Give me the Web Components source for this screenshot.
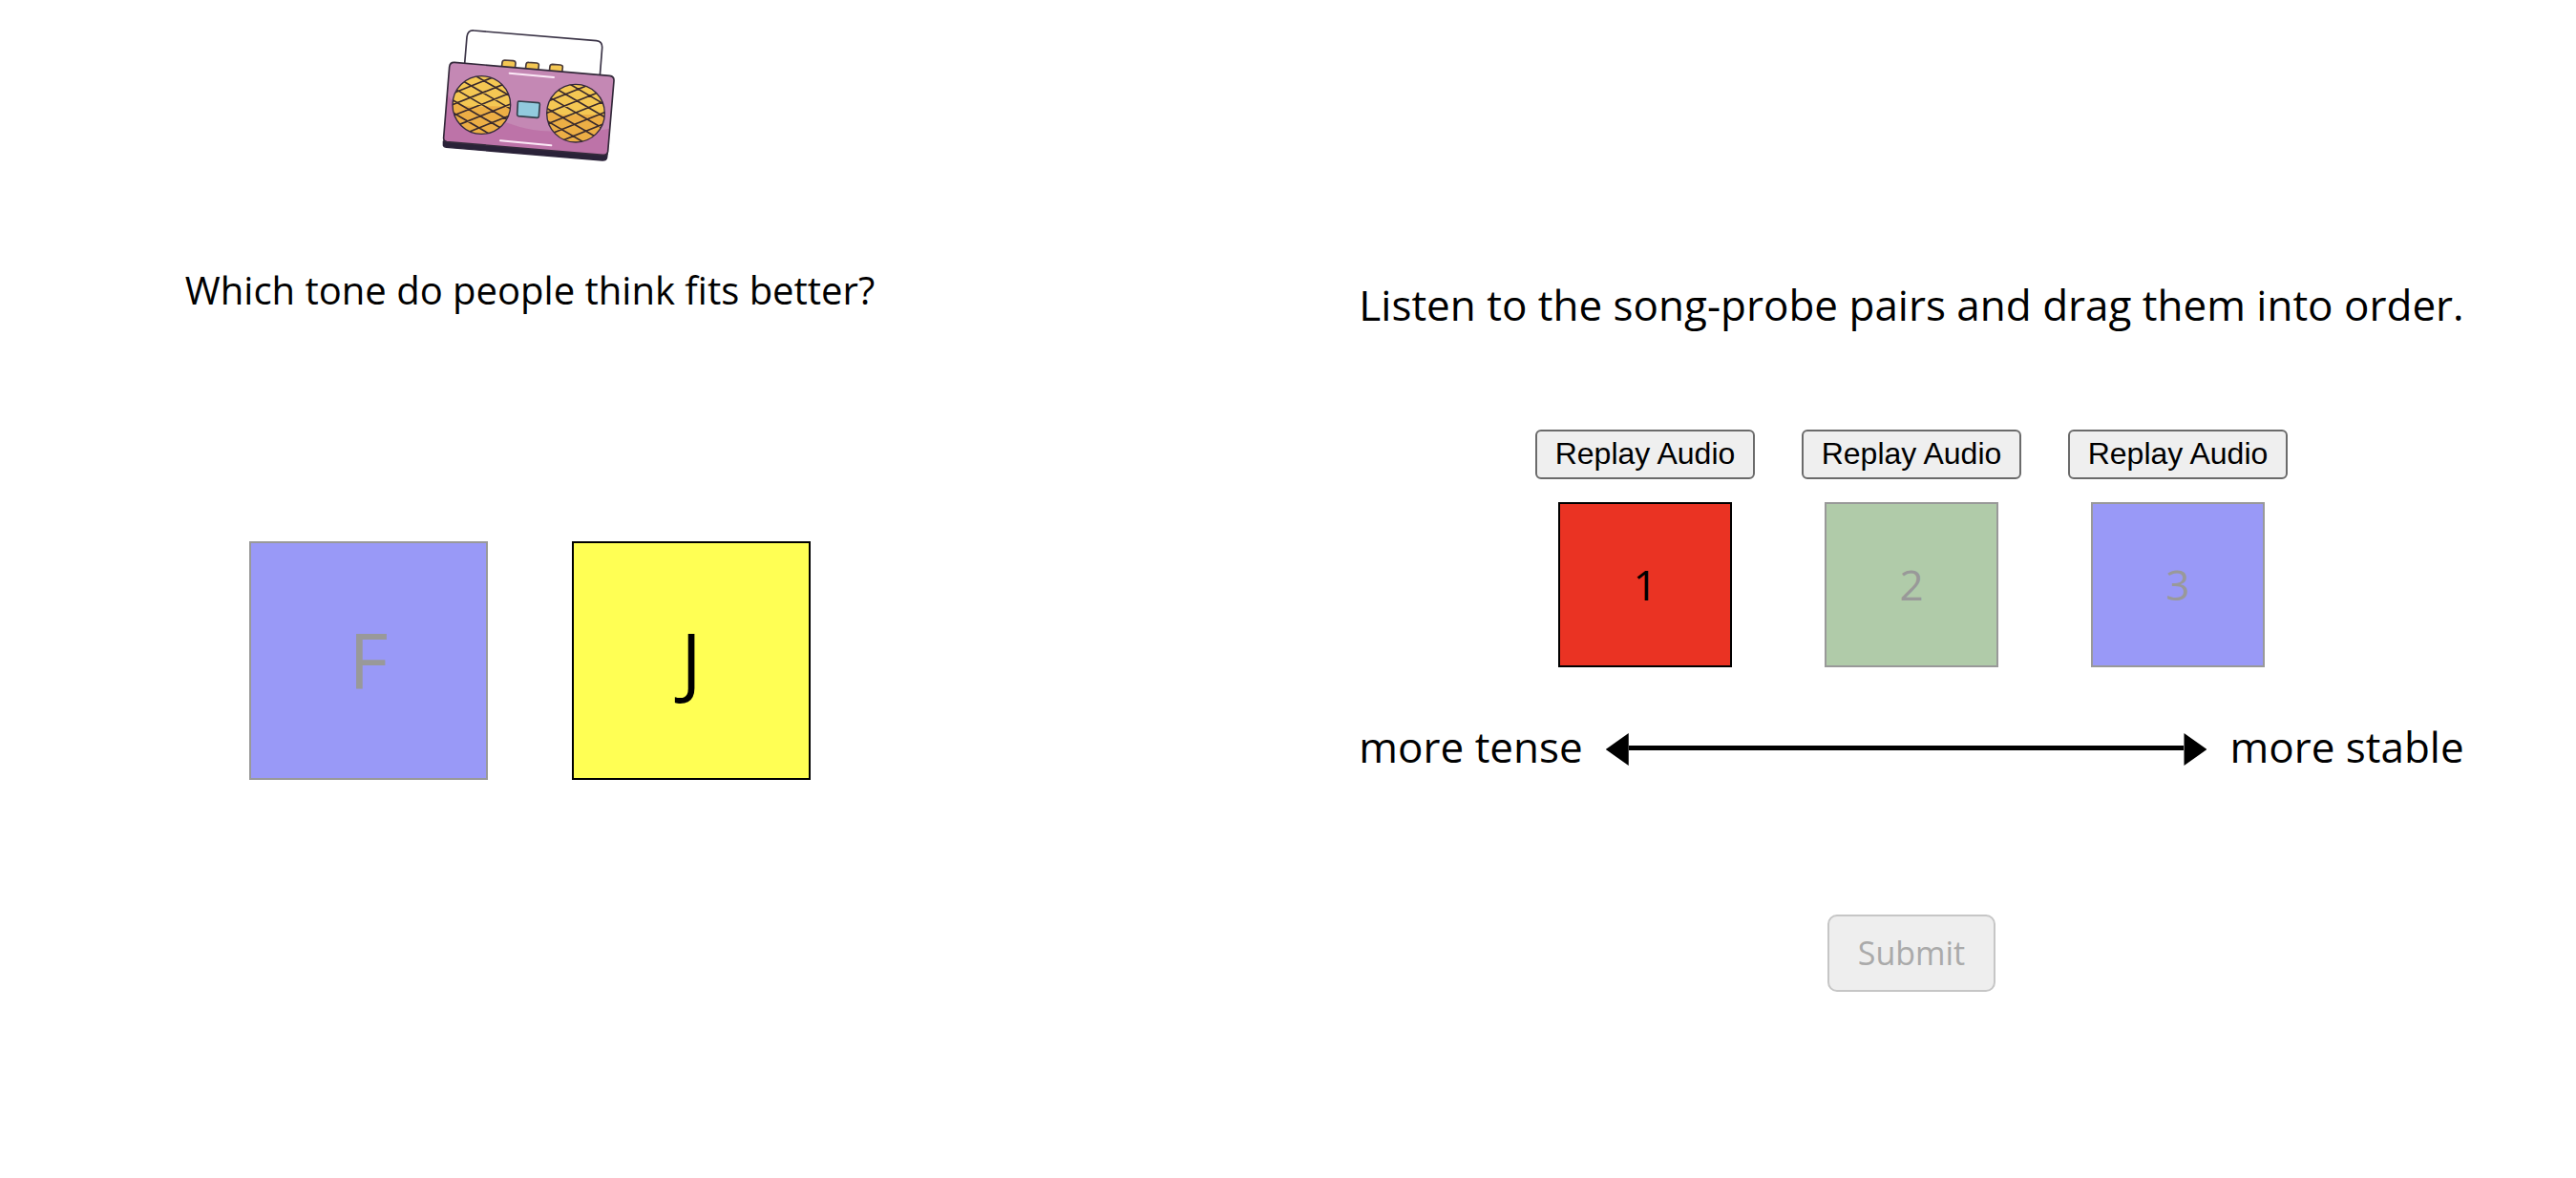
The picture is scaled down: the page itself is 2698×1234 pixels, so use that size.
<!DOCTYPE html>
<html lang="en">
<head>
<meta charset="utf-8">
<title>Tone judgement</title>
<style>
  body { margin: 0; background: #fff; color: #000; font-family: "Open Sans", "Noto Sans", sans-serif; }
</style>
</head>
<body>
<tone-experiment></tone-experiment>
<script>
const define = (name, html) => {
  const template = document.createElement('template');
  template.innerHTML = html;
  customElements.define(name, class extends HTMLElement {
    constructor() {
      super();
      this.attachShadow({ mode: 'open' }).append(template.content.cloneNode(true));
    }
    connectedCallback() {
      const button = this.shadowRoot.querySelector('button');
      if (button) button.disabled = this.hasAttribute('dimmed');
    }
  });
};

// Lattice of the speaker grille, centred on the origin.
const mesh = () => {
  let d = '';
  for (let i = -4; i <= 6; i++) {
    d += `M-100 ${i * 39.3 - 99.7}L100 ${i * 39.3 + 17}`;
    d += `M-100 ${i * 35.4 + 2.6}L100 ${i * 35.4 - 77.4}`;
  }
  return d;
};
const speaker = (x, y, id) => `
  <g transform="translate(${x} ${y})">
    <clipPath id="${id}"><circle r="91"/></clipPath>
    <g clip-path="url(#${id})">
      <circle r="91" fill="#f4c753"/>
      <path d="M-95 -8Q-50 8 0 5T95 8V95H-95Z" fill="#ecae45"/>
      <path d="${mesh()}" stroke="#3a2a2c" stroke-width="5"/>
    </g>
    <circle r="91" fill="none" stroke="#33293a" stroke-width="4"/>
  </g>`;

define('radio-picture', `
  <style>
    :host { display: block; }
    svg { display: block; width: 210px; height: 160px; }
  </style>
  <svg viewBox="0 0 630 480" role="img" aria-label="Radio" fill="none" stroke-linecap="round" stroke-linejoin="round">
    <path d="M110 140L117 56Q119 34 139 36L524 68Q543 70 542 90L535 178" stroke="#3a3346" stroke-width="5"/>
    <g fill="#f4c753" stroke="#4a3c3c" stroke-width="5">
      <path d="M226 153L228 136Q229 129 236 129L263 131Q270 132 270 139L268 156Z"/>
      <path d="M301 159L303 142Q304 135 311 136L337 138Q344 139 343 146L341 162Z"/>
      <path d="M376 165L378 148Q379 142 386 142L411 144Q419 145 418 152L416 168Z"/>
    </g>
    <path d="M43 384L43 397Q44 402 52 403L542 444Q555 445 557 435L559 420Z" fill="#2a2238" stroke="#2a2238" stroke-width="4"/>
    <path d="M62 150Q64 135 78 136L566 178Q580 180 579 194L560 416Q558 429 544 427L54 386Q43 384 44 372Z" fill="#c488b4"/>
    <path d="M55 231Q80 290 160 304C235 316 275 345 350 351Q430 357 500 352Q548 349 566 344L560 416Q558 429 544 427L54 386Q43 384 44 372Z" fill="#bd73a8"/>
    <path d="M62 150Q64 135 78 136L566 178Q580 180 579 194L560 416Q558 429 544 427L54 386Q43 384 44 372Z" stroke="#33293a" stroke-width="5"/>
    <path d="M251 170L390 183M222 382L382 397" stroke="#fbe9f6" stroke-width="6"/>
    ${speaker(163, 270, 'left')}
    ${speaker(459, 296, 'right')}
    <path d="M280 258L342 263Q346 264 346 268L343 306Q342 310 338 310L279 305Q275 304 275 300L277 262Q277 258 280 258Z" fill="#92cade" stroke="#33404c" stroke-width="5"/>
  </svg>`);

define('key-tile', `
  <style>
    :host { display: block; }
    button {
      display: block; box-sizing: border-box; width: 100%; height: var(--tile-height);
      margin: 0; padding: 0 0 2px; border: 2px solid #000; background: var(--tile-color);
      color: #000; font: inherit; text-align: center;
    }
    button:disabled { border-color: #999; color: #999; }
  </style>
  <button type="button"><slot></slot></button>`);

define('push-button', `
  <style>
    :host { display: block; }
    button {
      display: block; box-sizing: border-box; width: 100%; height: 52px; margin: 0; padding: 0 0 2px;
      border: 2px solid #6b6b6b; border-radius: 6px; background: #efefef; color: #000;
      font: 32px/36px "Liberation Sans", Arial, sans-serif;
    }
  </style>
  <button type="button"><slot></slot></button>`);

define('submit-button', `
  <style>
    :host { display: block; }
    button {
      display: block; padding: 14px 30px; border: 2px solid #c6c6c6; border-radius: 10px;
      background: #eee; color: #aaa; font: inherit; font-size: 34px; line-height: 49px;
    }
  </style>
  <button type="submit"><slot></slot></button>`);

define('double-arrow', `
  <style>
    :host { display: flex; align-items: center; padding-top: 6px; }
    i { flex: none; width: 24px; height: 34px; background: #000; }
    .start { clip-path: polygon(0 50%, 100% 0, 100% 100%); }
    .end { clip-path: polygon(100% 50%, 0 0, 0 100%); }
    span { flex: 1; height: 5px; margin-bottom: 4px; background: #000; }
  </style>
  <i class="start"></i><span></span><i class="end"></i>`);

define('tone-choice', `
  <style>
    :host { display: flex; flex-direction: column; align-items: center; }
    h1 { margin: 94px 0 233px; font-size: 40px; line-height: 60px; font-weight: 400; }
    .keys { display: flex; gap: 88px; font-size: 80px; line-height: 110px; --tile-height: 250px; }
    key-tile { width: 250px; }
  </style>
  <radio-picture></radio-picture>
  <h1>Which tone do people think fits better?</h1>
  <div class="keys">
    <key-tile dimmed style="--tile-color:#9999f7">F</key-tile>
    <key-tile style="--tile-color:#ffff54">J</key-tile>
  </div>`);

define('probe-card', `
  <style>
    :host { display: flex; flex-direction: column; align-items: center; gap: 24px; width: 230px; --tile-height: 173px; }
    push-button { align-self: stretch; }
    ::slotted(key-tile) { width: 182px; }
  </style>
  <push-button>Replay Audio</push-button>
  <slot></slot>`);

define('tone-ranking', `
  <style>
    :host { display: flex; flex-direction: column; align-items: center; font-size: 44px; line-height: 60px; }
    .sheet { display: flex; flex-direction: column; width: max-content; }
    h1 { margin: 0 0 101px; font-size: 44px; line-height: 60px; font-weight: 400; }
    .cards { display: flex; justify-content: center; gap: 49px; }
    .scale { display: flex; align-items: center; gap: 24px; margin: 53px 0 146px; }
    double-arrow { flex: 1; }
  </style>
  <div class="sheet">
    <h1>Listen to the song-probe pairs and drag them into order.</h1>
    <div class="cards">
      <probe-card><key-tile style="--tile-color:#ea3323">1</key-tile></probe-card>
      <probe-card><key-tile dimmed style="--tile-color:#b0cba9">2</key-tile></probe-card>
      <probe-card><key-tile dimmed style="--tile-color:#9999f7">3</key-tile></probe-card>
    </div>
    <div class="scale"><span>more tense</span><double-arrow></double-arrow><span>more stable</span></div>
  </div>
  <submit-button dimmed>Submit</submit-button>`);

define('tone-experiment', `
  <style>
    :host { display: grid; grid-template-columns: 1110fr 1392fr; column-gap: 196px; align-items: start; }
    tone-choice { padding-top: 20px; }
    tone-ranking { padding-top: 289px; }
  </style>
  <tone-choice></tone-choice>
  <tone-ranking></tone-ranking>`);
</script>
</body>
</html>
